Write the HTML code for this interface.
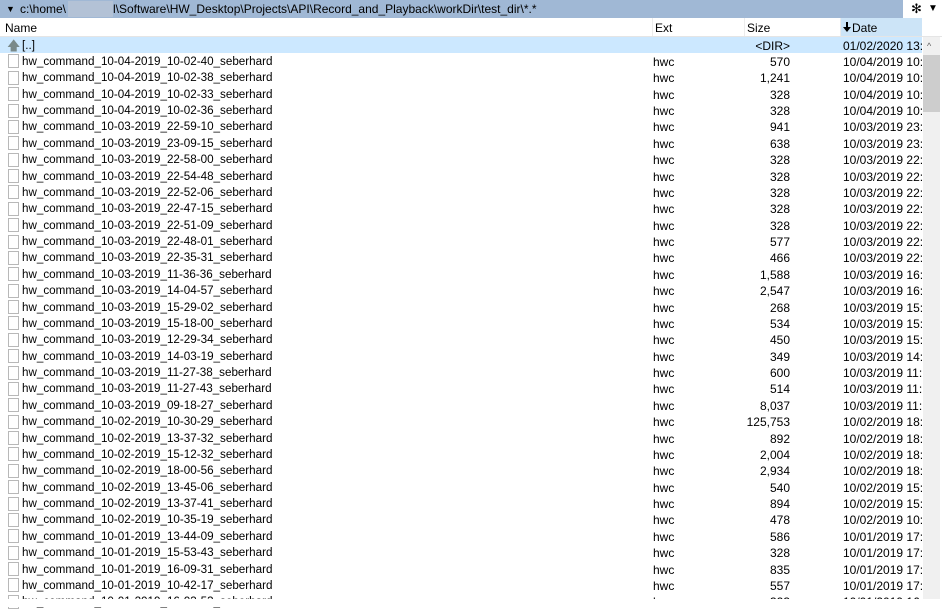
<!DOCTYPE html>
<html><head><meta charset="utf-8"><style>
*{margin:0;padding:0;box-sizing:border-box}
body{width:942px;height:607px;background:#fff;font-family:"Liberation Sans",sans-serif;font-size:12px;color:#000;position:relative;overflow:hidden}
.bar{position:absolute;left:0;top:0;width:903px;height:18px;background:#a0b8d5}
.bar span{position:absolute;top:2px;white-space:nowrap}
.red{position:absolute;left:68px;top:1px;width:45px;height:16px;background:#b3c2d6}
.tr{position:absolute;right:0;top:0;width:39px;height:18px;background:#fff}
.hdr{position:absolute;left:0;top:18px;width:942px;height:19px;border-bottom:1px solid #e5e5e5}
.hdr span{position:absolute;top:3px}
.datehdr{position:absolute;left:841px;top:0;width:81px;height:18px;background:#cce4f7}
.sep{position:absolute;top:0;width:1px;height:18px;background:#ececec}
.row{position:absolute;left:0;width:922px;height:16.375px}
.row span{position:absolute;top:1.5px;white-space:nowrap}
.n{left:22px;font-size:11.65px}.e{left:653px}.s{right:132px}.d{left:843px;width:79px;overflow:hidden}
.fi{position:absolute;left:8px;top:1px;width:11px;height:14px;border:1px solid #b8b8b8;background:#fff}
.sb{position:absolute;left:923px;top:37px;width:17px;height:562px;background:#f0f0f0}
.th{position:absolute;left:923px;top:55px;width:17px;height:57px;background:#cdcdcd}
.bot{position:absolute;left:0;top:599px;width:942px;height:8px;background:#fff}
</style></head><body>
<div class="bar"><span style="left:6px;font-size:9px;top:4px">▼</span><span style="left:20px">c:\home\</span><div class="red"></div><span style="left:113px">l\Software\HW_Desktop\Projects\API\Record_and_Playback\workDir\test_dir\*.*</span></div>
<div class="tr"><span style="position:absolute;left:8px;top:1px;font-size:13px">✻</span><span style="position:absolute;left:25px;top:3px;font-size:10px">▼</span></div>
<div class="hdr"><div class="datehdr"></div><div class="sep" style="left:652px"></div><div class="sep" style="left:744px"></div><div class="sep" style="left:840px"></div>
<span style="left:5px">Name</span><span style="left:655px">Ext</span><span style="left:747px">Size</span>
<svg style="position:absolute;left:843px;top:4px" width="8" height="10" viewBox="0 0 8 10"><path d="M3 0h2v5h3l-4 5-4-5h3z" fill="#000"/></svg><span style="left:852px">Date</span></div>
<div id="rows"></div>
<div class="sb"><div style="position:absolute;left:4px;top:4px;font-size:9px;color:#606060">^</div></div><div class="th"></div>
<div class="bot"></div>
<script>
var d=[["[..]","","<DIR>","01/02/2020 13:05"],
["10-04-2019_10-02-40","570","10/04/2019 10:2"],["10-04-2019_10-02-38","1,241","10/04/2019 10:2"],["10-04-2019_10-02-33","328","10/04/2019 10:2"],["10-04-2019_10-02-36","328","10/04/2019 10:2"],["10-03-2019_22-59-10","941","10/03/2019 23:2"],["10-03-2019_23-09-15","638","10/03/2019 23:2"],["10-03-2019_22-58-00","328","10/03/2019 22:5"],["10-03-2019_22-54-48","328","10/03/2019 22:5"],["10-03-2019_22-52-06","328","10/03/2019 22:5"],["10-03-2019_22-47-15","328","10/03/2019 22:5"],["10-03-2019_22-51-09","328","10/03/2019 22:5"],["10-03-2019_22-48-01","577","10/03/2019 22:5"],["10-03-2019_22-35-31","466","10/03/2019 22:3"],["10-03-2019_11-36-36","1,588","10/03/2019 16:0"],["10-03-2019_14-04-57","2,547","10/03/2019 16:0"],["10-03-2019_15-29-02","268","10/03/2019 15:4"],["10-03-2019_15-18-00","534","10/03/2019 15:2"],["10-03-2019_12-29-34","450","10/03/2019 15:0"],["10-03-2019_14-03-19","349","10/03/2019 14:0"],["10-03-2019_11-27-38","600","10/03/2019 11:3"],["10-03-2019_11-27-43","514","10/03/2019 11:3"],["10-03-2019_09-18-27","8,037","10/03/2019 11:2"],["10-02-2019_10-30-29","125,753","10/02/2019 18:0"],["10-02-2019_13-37-32","892","10/02/2019 18:0"],["10-02-2019_15-12-32","2,004","10/02/2019 18:0"],["10-02-2019_18-00-56","2,934","10/02/2019 18:0"],["10-02-2019_13-45-06","540","10/02/2019 15:1"],["10-02-2019_13-37-41","894","10/02/2019 15:1"],["10-02-2019_10-35-19","478","10/02/2019 10:3"],["10-01-2019_13-44-09","586","10/01/2019 17:2"],["10-01-2019_15-53-43","328","10/01/2019 17:2"],["10-01-2019_16-09-31","835","10/01/2019 17:2"],["10-01-2019_10-42-17","557","10/01/2019 17:2"],["10-01-2019_16-03-53","323","10/01/2019 16:0"]];
var h="";
d.forEach(function(r,i){var t=37+i*16.375;
if(i==0){h+='<div class="row" style="top:'+t+'px;background:#cce8ff"><span style="left:7px;top:0;color:#7a8a8a;font-size:13px">🡅</span><span class="n">[..]</span><span class="s">&lt;DIR&gt;</span><span class="d">01/02/2020 13:05</span></div>';}
else h+='<div class="row" style="top:'+t+'px"><div class="fi"></div><span class="n">hw_command_'+r[0]+'_seberhard</span><span class="e">hwc</span><span class="s">'+r[1]+'</span><span class="d">'+r[2]+'</span></div>';});
document.getElementById("rows").innerHTML=h;
</script>
</body></html>
